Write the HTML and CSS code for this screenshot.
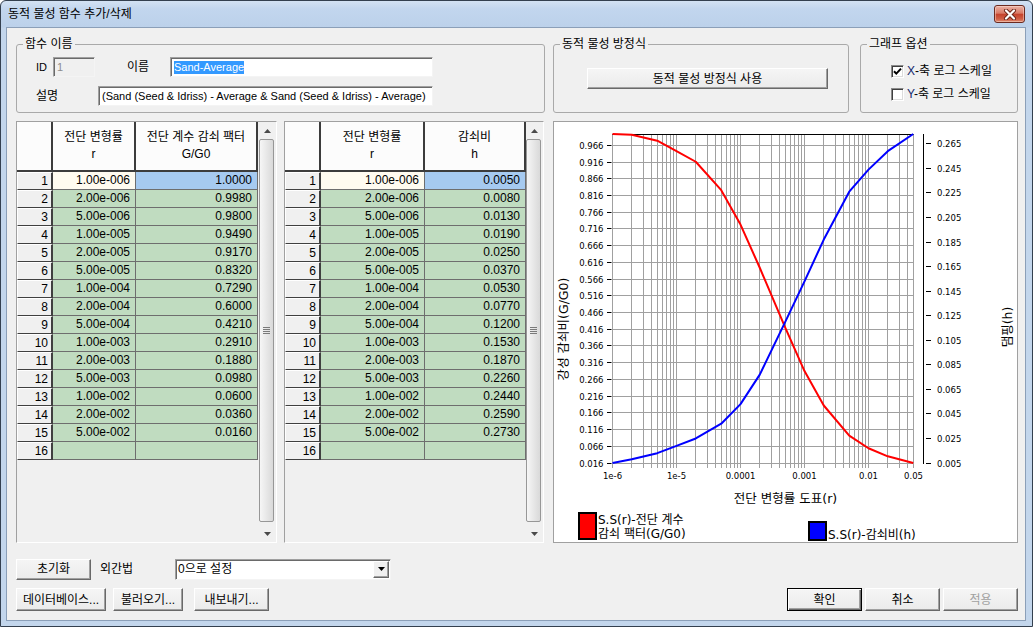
FILE: index.html
```html
<!DOCTYPE html>
<html lang="ko">
<head>
<meta charset="utf-8">
<title>동적 물성 함수 추가/삭제</title>
<link rel="stylesheet" href="styles.css">
</head>
<body>
<div class="window">
  <div class="titlebar">
    <span class="title">동적 물성 함수 추가/삭제</span>
    <span class="close"><svg width="14" height="11" viewBox="0 0 14 11"><path d="M3 1.5L11 9.5M11 1.5L3 9.5" stroke="#6a2418" stroke-width="4" stroke-linecap="round"/><path d="M3 1.5L11 9.5M11 1.5L3 9.5" stroke="#fff" stroke-width="2.2" stroke-linecap="round"/></svg></span>
  </div>
  <div class="client">
    <div class="top">
      <div class="group g-name">
        <div class="gtitle">함수 이름</div>
        <div class="row r1">
          <span class="lbl lbl-id">ID</span>
          <span class="edit edit-id">1</span>
          <span class="lbl lbl-name">이름</span>
          <span class="edit edit-name"><span class="sel">Sand-Average</span></span>
        </div>
        <div class="row r2">
          <span class="lbl lbl-desc">설명</span>
          <span class="edit edit-desc">(Sand (Seed &amp; Idriss) - Average &amp; Sand (Seed &amp; Idriss) - Average)</span>
        </div>
      </div>
      <div class="group g-eq">
        <div class="gtitle">동적 물성 방정식</div>
        <div class="btn btn-eq">동적 물성 방정식 사용</div>
      </div>
      <div class="group g-opt">
        <div class="gtitle">그래프 옵션</div>
        <div class="check c1"><span class="box"><svg width="11" height="11" viewBox="0 0 11 11"><path d="M2 5.2L4.3 7.6L9 2.6" fill="none" stroke="#000" stroke-width="2"/></svg></span><span><span class="xy">X</span>-축 로그 스케일</span></div>
        <div class="check c2"><span class="box"></span><span><span class="xy">Y</span>-축 로그 스케일</span></div>
      </div>
    </div>

    <div class="middle">
      <div class="tpanel tp-left">
        <div class="grid grid-l">
          <div class="hc"></div>
          <div class="hc"><span>전단 변형률</span><span>r</span></div>
          <div class="hc"><span>전단 계수 감쇠 팩터</span><span>G/G0</span></div>
          <div class="rn">1</div><div class="dc iv">1.00e-006</div><div class="dc sc">1.0000</div>
          <div class="rn">2</div><div class="dc">2.00e-006</div><div class="dc">0.9980</div>
          <div class="rn">3</div><div class="dc">5.00e-006</div><div class="dc">0.9800</div>
          <div class="rn">4</div><div class="dc">1.00e-005</div><div class="dc">0.9490</div>
          <div class="rn">5</div><div class="dc">2.00e-005</div><div class="dc">0.9170</div>
          <div class="rn">6</div><div class="dc">5.00e-005</div><div class="dc">0.8320</div>
          <div class="rn">7</div><div class="dc">1.00e-004</div><div class="dc">0.7290</div>
          <div class="rn">8</div><div class="dc">2.00e-004</div><div class="dc">0.6000</div>
          <div class="rn">9</div><div class="dc">5.00e-004</div><div class="dc">0.4210</div>
          <div class="rn">10</div><div class="dc">1.00e-003</div><div class="dc">0.2910</div>
          <div class="rn">11</div><div class="dc">2.00e-003</div><div class="dc">0.1880</div>
          <div class="rn">12</div><div class="dc">5.00e-003</div><div class="dc">0.0980</div>
          <div class="rn">13</div><div class="dc">1.00e-002</div><div class="dc">0.0600</div>
          <div class="rn">14</div><div class="dc">2.00e-002</div><div class="dc">0.0360</div>
          <div class="rn">15</div><div class="dc">5.00e-002</div><div class="dc">0.0160</div>
          <div class="rn">16</div><div class="dc"></div><div class="dc"></div>
        </div>
        <div class="vscroll vs-left">
          <div class="arrow"><svg width="7" height="4" viewBox="0 0 7 4"><path d="M0 4L3.5 0L7 4Z" fill="#4a4a4a"/></svg></div>
          <div class="thumb"><svg width="7" height="7" viewBox="0 0 7 7"><path d="M0 0.5H7M0 2.5H7M0 4.5H7M0 6.5H7" stroke="#7a7a7a"/></svg></div>
          <div class="arrow"><svg width="7" height="4" viewBox="0 0 7 4"><path d="M0 0L7 0L3.5 4Z" fill="#4a4a4a"/></svg></div>
        </div>
      </div>

      <div class="tpanel tp-right">
        <div class="grid grid-r">
          <div class="hc"></div>
          <div class="hc"><span>전단 변형률</span><span>r</span></div>
          <div class="hc"><span>감쇠비</span><span>h</span></div>
          <div class="rn">1</div><div class="dc iv">1.00e-006</div><div class="dc sc">0.0050</div>
          <div class="rn">2</div><div class="dc">2.00e-006</div><div class="dc">0.0080</div>
          <div class="rn">3</div><div class="dc">5.00e-006</div><div class="dc">0.0130</div>
          <div class="rn">4</div><div class="dc">1.00e-005</div><div class="dc">0.0190</div>
          <div class="rn">5</div><div class="dc">2.00e-005</div><div class="dc">0.0250</div>
          <div class="rn">6</div><div class="dc">5.00e-005</div><div class="dc">0.0370</div>
          <div class="rn">7</div><div class="dc">1.00e-004</div><div class="dc">0.0530</div>
          <div class="rn">8</div><div class="dc">2.00e-004</div><div class="dc">0.0770</div>
          <div class="rn">9</div><div class="dc">5.00e-004</div><div class="dc">0.1200</div>
          <div class="rn">10</div><div class="dc">1.00e-003</div><div class="dc">0.1530</div>
          <div class="rn">11</div><div class="dc">2.00e-003</div><div class="dc">0.1870</div>
          <div class="rn">12</div><div class="dc">5.00e-003</div><div class="dc">0.2260</div>
          <div class="rn">13</div><div class="dc">1.00e-002</div><div class="dc">0.2440</div>
          <div class="rn">14</div><div class="dc">2.00e-002</div><div class="dc">0.2590</div>
          <div class="rn">15</div><div class="dc">5.00e-002</div><div class="dc">0.2730</div>
          <div class="rn">16</div><div class="dc"></div><div class="dc"></div>
        </div>
        <div class="vscroll vs-right">
          <div class="arrow"><svg width="7" height="4" viewBox="0 0 7 4"><path d="M0 4L3.5 0L7 4Z" fill="#4a4a4a"/></svg></div>
          <div class="thumb"><svg width="7" height="7" viewBox="0 0 7 7"><path d="M0 0.5H7M0 2.5H7M0 4.5H7M0 6.5H7" stroke="#7a7a7a"/></svg></div>
          <div class="arrow"><svg width="7" height="4" viewBox="0 0 7 4"><path d="M0 0L7 0L3.5 4Z" fill="#4a4a4a"/></svg></div>
        </div>
      </div>

      <div class="chart">
        <svg class="plot" width="463" height="420" viewBox="1 1 463 420">
          <defs>
            <path id="dec" d="M0 13V347M19 13V347M31 13V347M39 13V347M45 13V347M50 13V347M54 13V347M58 13V347M61 13V347" stroke="#a0a0a0" stroke-width="1" fill="none"/>
          </defs>
          <path d="M59.5 342.5H360.5M59.5 325.5H360.5M59.5 308.5H360.5M59.5 291.5H360.5M59.5 275.5H360.5M59.5 258.5H360.5M59.5 241.5H360.5M59.5 224.5H360.5M59.5 208.5H360.5M59.5 191.5H360.5M59.5 174.5H360.5M59.5 158.5H360.5M59.5 141.5H360.5M59.5 124.5H360.5M59.5 107.5H360.5M59.5 91.5H360.5M59.5 74.5H360.5M59.5 57.5H360.5M59.5 41.5H360.5M59.5 24.5H360.5" stroke="#a0a0a0" stroke-width="1" fill="none"/>
          <use href="#dec" x="59.5"/>
          <use href="#dec" x="123.5"/>
          <use href="#dec" x="187.5"/>
          <use href="#dec" x="251.5"/>
          <path d="M315.5 13V347M334.5 13V347M346.5 13V347M354.5 13V347M360.5 13V347" stroke="#a0a0a0" stroke-width="1" fill="none"/>
          <path d="M59.5 13.5H360.5" stroke="#000" stroke-width="1.2"/>
          <path d="M54 342.5h4.5M54 325.5h4.5M54 308.5h4.5M54 291.5h4.5M54 275.5h4.5M54 258.5h4.5M54 241.5h4.5M54 224.5h4.5M54 208.5h4.5M54 191.5h4.5M54 174.5h4.5M54 158.5h4.5M54 141.5h4.5M54 124.5h4.5M54 107.5h4.5M54 91.5h4.5M54 74.5h4.5M54 57.5h4.5M54 41.5h4.5M54 24.5h4.5" stroke="#000" stroke-width="1"/>
          <path d="M370.5 13V343" stroke="#000" stroke-width="1"/>
          <path d="M373 342.5h5M373 317.5h5M373 292.5h5M373 268.5h5M373 243.5h5M373 219.5h5M373 194.5h5M373 170.5h5M373 145.5h5M373 121.5h5M373 96.5h5M373 71.5h5M373 47.5h5M373 22.5h5" stroke="#000" stroke-width="1"/>

          <g class="ax" text-anchor="end">
            <text x="50.5" y="345.6">0.016</text>
            <text x="50.5" y="328.6">0.066</text>
            <text x="50.5" y="311.6">0.116</text>
            <text x="50.5" y="294.6">0.166</text>
            <text x="50.5" y="278.6">0.216</text>
            <text x="50.5" y="261.6">0.266</text>
            <text x="50.5" y="244.6">0.316</text>
            <text x="50.5" y="227.6">0.366</text>
            <text x="50.5" y="211.6">0.416</text>
            <text x="50.5" y="194.6">0.466</text>
            <text x="50.5" y="177.6">0.516</text>
            <text x="50.5" y="161.6">0.566</text>
            <text x="50.5" y="144.6">0.616</text>
            <text x="50.5" y="127.6">0.666</text>
            <text x="50.5" y="110.6">0.716</text>
            <text x="50.5" y="94.6">0.766</text>
            <text x="50.5" y="77.6">0.816</text>
            <text x="50.5" y="60.6">0.866</text>
            <text x="50.5" y="44.6">0.916</text>
            <text x="50.5" y="27.6">0.966</text>
          </g>
          <g class="ax" text-anchor="start">
            <text x="384" y="345.6">0.005</text>
            <text x="384" y="320.6">0.025</text>
            <text x="384" y="295.6">0.045</text>
            <text x="384" y="271.6">0.065</text>
            <text x="384" y="246.6">0.085</text>
            <text x="384" y="222.6">0.105</text>
            <text x="384" y="197.6">0.125</text>
            <text x="384" y="173.6">0.145</text>
            <text x="384" y="148.6">0.165</text>
            <text x="384" y="124.6">0.185</text>
            <text x="384" y="99.6">0.205</text>
            <text x="384" y="74.6">0.225</text>
            <text x="384" y="50.6">0.245</text>
            <text x="384" y="25.6">0.265</text>
          </g>
          <g class="ax" text-anchor="middle">
            <text x="59.5" y="358">1e-6</text>
            <text x="123.5" y="358">1e-5</text>
            <text x="187.5" y="358">0.0001</text>
            <text x="251.5" y="358">0.001</text>
            <text x="315.5" y="358">0.01</text>
            <text x="360.5" y="358">0.05</text>
          </g>

          <polyline points="59.5,13 78.77,13.67 104.24,19.69 123.5,30.05 142.77,40.75 168.24,69.17 187.5,103.61 206.77,146.74 232.24,206.59 251.5,250.05 270.77,284.49 296.24,314.58 315.5,327.29 334.77,335.31 360.24,342" fill="none" stroke="#ff0000" stroke-width="2" stroke-linejoin="round"/>
          <polyline points="59.5,342 78.77,338.32 104.24,332.18 123.5,324.81 142.77,317.45 168.24,302.72 187.5,283.08 206.77,253.61 232.24,200.83 251.5,160.32 270.77,118.58 296.24,70.7 315.5,48.6 334.77,30.19 360.24,13" fill="none" stroke="#0000ff" stroke-width="2" stroke-linejoin="round"/>

          <text class="ttl" text-anchor="middle" transform="translate(15 208) rotate(-90)">강성 감쇠비(G/G0)</text>
          <text class="ttl" text-anchor="middle" transform="translate(459 206) rotate(-90)">댐핑(h)</text>
          <text class="ttl" text-anchor="middle" x="232.5" y="382">전단 변형률 도표(r)</text>

          <rect x="26" y="392" width="17" height="26" fill="#ff0000" stroke="#000" stroke-width="2"/>
          <text class="lg" x="45" y="402.5">S.S(r)-전단 계수</text>
          <text class="lg" x="45" y="416.5">감쇠 팩터(G/G0)</text>
          <rect x="256" y="401" width="17" height="18" fill="#0000ff" stroke="#000" stroke-width="2"/>
          <text class="lg" x="275" y="417.5">S.S(r)-감쇠비(h)</text>
        </svg>
      </div>
    </div>

    <div class="b1">
      <div class="btn btn-init">초기화</div>
      <span class="lbl lbl-ext">외간법</span>
      <div class="combo"><span class="combo-text">0으로 설정</span><span class="drop"><svg width="7" height="4" viewBox="0 0 7 4"><path d="M0 0L7 0L3.5 4Z" fill="#000"/></svg></span></div>
    </div>
    <div class="b2">
      <div class="btn btn-db">데이터베이스...</div>
      <div class="btn btn-load">불러오기...</div>
      <div class="btn btn-export">내보내기...</div>
      <div class="spacer"></div>
      <div class="btn btn-ok">확인</div>
      <div class="btn btn-cancel">취소</div>
      <div class="btn btn-apply">적용</div>
    </div>
  </div>
</div>
</body>
</html>
```

FILE: styles.css
```css
* { box-sizing: border-box; }
html, body { margin: 0; padding: 0; }
body {
  width: 1033px;
  height: 627px;
  overflow: hidden;
  background: #ffffff;
  font-family: "Liberation Sans", "Noto Sans CJK KR", sans-serif;
  font-size: 12px;
  color: #000;
}

.window {
  width: 1033px;
  height: 627px;
  border: 1px solid #34404f;
  border-radius: 6px 6px 0 0;
  background: linear-gradient(#d3e2f3 0px, #c2d6ee 8px, #bcd1ea 26px, #c3d6ec 27px, #c3d6ec 100%);
  padding: 0 6px 5px 5px;
  display: flex;
  flex-direction: column;
}

.titlebar {
  height: 26px;
  flex: none;
  display: flex;
  align-items: center;
  justify-content: space-between;
  padding: 0 1px 0 2px;
}
.title { font-size: 12px; line-height: 16px; color: #000; }
.close {
  width: 31px;
  height: 18px;
  border: 1px solid #6b2a20;
  border-radius: 3px;
  background: linear-gradient(#eab2a5 0%, #d97a66 45%, #c5432d 52%, #cf5d44 80%, #e08a6e 100%);
  box-shadow: inset 0 0 0 1px rgba(255, 230, 220, 0.45);
  display: flex;
  align-items: center;
  justify-content: center;
}
.close svg { display: block; }

.client {
  flex: 1;
  border: 1px solid #8b9fb8;
  background: #f0f0f0;
  padding: 16px 7px 0 9px;
  display: flex;
  flex-direction: column;
}

/* ---------- top groups ---------- */
.top { display: flex; height: 69px; flex: none; }
.group {
  height: 69px;
  border: 1px solid #a9a9a9;
  border-radius: 3px;
}
.g-name { width: 529px; margin-right: 8px; }
.g-eq { width: 296px; margin-right: 11px; }
.g-opt { width: 158px; }
.gtitle {
  width: fit-content;
  height: 16px;
  margin: -9px 0 0 6px;
  padding: 0 2px;
  background: #f0f0f0;
  line-height: 16px;
  font-size: 12px;
}

.row { display: flex; align-items: center; height: 20px; }
.r1 { margin-top: 5px; }
.r2 { margin-top: 9px; }
.lbl { font-size: 12px; line-height: 16px; white-space: nowrap; }
.lbl-id { margin-left: 19px; width: 17px; font-size: 11px; }
.lbl-name { margin-left: 32px; width: 24px; }
.lbl-desc { margin-left: 19px; width: 24px; }

.edit {
  height: 20px;
  background: #fff;
  border-top: 1px solid #a0a0a0;
  border-left: 1px solid #a0a0a0;
  border-right: 1px solid #f4f4f4;
  border-bottom: 1px solid #f4f4f4;
  box-shadow: inset 1px 1px 0 #6a6a6a;
  font-size: 11px;
  line-height: 17px;
  padding: 1px 0 0 3px;
  white-space: nowrap;
  overflow: hidden;
}
.edit-id { width: 42px; background: #f0f0f0; color: #8d8d8d; }
.edit-name { margin-left: 19px; width: 263px; }
.edit-desc { margin-left: 38px; width: 335px; }
.sel { background: #3399ff; color: #fff; display: inline-block; line-height: 13px; }

.btn {
  display: flex;
  align-items: center;
  justify-content: center;
  background: linear-gradient(#f5f5f5, #ebebeb);
  border: 1px solid;
  border-color: #ffffff #696969 #696969 #ffffff;
  box-shadow: inset -1px -1px 0 #a0a0a0;
  font-size: 12px;
  line-height: 14px;
  white-space: nowrap;
  color: #000;
}
.btn-eq { margin: 16px 0 0 33px; width: 241px; height: 21px; }

.check { display: flex; align-items: center; height: 16px; margin-left: 30px; font-size: 12px; line-height: 16px; }
.c1 { margin-top: 11px; }
.c2 { margin-top: 7px; }
.box {
  width: 13px;
  height: 13px;
  margin-right: 3px;
  background: #fff;
  border: 1px solid;
  border-color: #8a8a8a #ffffff #ffffff #8a8a8a;
  box-shadow: inset 1px 1px 0 #3f3f3f, inset -1px -1px 0 #dcdcdc;
  display: flex;
  align-items: center;
  justify-content: center;
}
.box svg { display: block; }
.xy { color: #14286e; }

/* ---------- tables ---------- */
.middle { display: flex; height: 422px; margin-top: 8px; flex: none; }
.tpanel {
  display: flex;
  height: 422px;
  background: #f0f0f0;
  border: 1px solid;
  border-color: #a0a0a0 #ffffff #ffffff #a0a0a0;
}
.tp-left { width: 261px; margin-right: 7px; }
.tp-right { width: 260px; margin-right: 9px; }

.grid {
  display: grid;
  grid-template-rows: 50px repeat(16, 18px);
  align-content: start;
  align-self: flex-start;
}
.grid-l { grid-template-columns: 36px 83px 122px; }
.grid-r { grid-template-columns: 36px 104px 101px; }

.hc {
  background: #fcfcfc;
  border-right: 2px solid #3c3c3c;
  border-bottom: 2px solid #3c3c3c;
  display: flex;
  flex-direction: column;
  align-items: center;
  justify-content: center;
  line-height: 17px;
  font-size: 12px;
  white-space: nowrap;
}
.rn {
  height: 18px;
  background: #f0f0f0;
  border-top: 1px solid #ffffff;
  border-left: 1px solid #ffffff;
  border-right: 2px solid #404040;
  border-bottom: 1px solid #404040;
  text-align: right;
  padding-right: 3px;
  line-height: 16px;
  font-size: 12px;
}
.dc {
  height: 18px;
  background: #c0dcc0;
  border-right: 1px solid #6e6e6e;
  border-bottom: 1px solid #6e6e6e;
  text-align: right;
  padding-right: 5px;
  line-height: 17px;
  font-size: 12px;
  white-space: nowrap;
}
.dc.iv { background: #fffbf0; }
.dc.sc { background: #a6caf0; }

.vscroll { display: flex; flex-direction: column; width: 17px; background: #f0f0f0; }
.vs-left { margin-left: 1px; }
.arrow { height: 17px; flex: none; display: flex; align-items: center; justify-content: center; }
.arrow svg { display: block; }
.thumb {
  flex: 1;
  margin: 0 2px 3px 0;
  border: 1px solid #979797;
  border-radius: 2px;
  background: linear-gradient(to right, #f6f6f6, #e6e6e6 55%, #d9d9d9);
  display: flex;
  align-items: center;
  justify-content: center;
}
.thumb svg { display: block; }

/* ---------- chart ---------- */
.chart {
  width: 465px;
  height: 422px;
  border: 1px solid #a0a0a0;
  background: #fff;
}
.plot { display: block; }
.ax { font-family: "DejaVu Sans", sans-serif; font-size: 8.5px; fill: #000; }
.ttl { font-family: "DejaVu Sans", "Noto Sans CJK KR", sans-serif; font-size: 12.5px; fill: #000; }
.lg { font-family: "DejaVu Sans", "Noto Sans CJK KR", sans-serif; font-size: 12px; fill: #000; }

/* ---------- bottom ---------- */
.b1 { display: flex; align-items: center; height: 22px; margin-top: 15px; flex: none; }
.btn-init { width: 75px; height: 21px; }
.lbl-ext { margin-left: 9px; width: 36px; }
.combo {
  margin-left: 39px;
  width: 216px;
  height: 21px;
  display: flex;
  align-items: center;
  background: #fff;
  border-top: 1px solid #a0a0a0;
  border-left: 1px solid #a0a0a0;
  border-right: 1px solid #f4f4f4;
  border-bottom: 1px solid #f4f4f4;
  box-shadow: inset 1px 1px 0 #6a6a6a;
}
.combo-text { flex: 1; padding-left: 2px; font-size: 12px; line-height: 16px; white-space: nowrap; }
.drop {
  width: 16px;
  height: 17px;
  margin-right: 1px;
  display: flex;
  align-items: center;
  justify-content: center;
  background: #f0f0f0;
  border: 1px solid;
  border-color: #ffffff #696969 #696969 #ffffff;
  box-shadow: inset -1px -1px 0 #a0a0a0;
}
.drop svg { display: block; }

.b2 { display: flex; height: 23px; margin-top: 8px; flex: none; }
.b2 .btn { height: 23px; }
.btn-db { width: 90px; }
.btn-load { width: 70px; margin-left: 7px; }
.btn-export { width: 75px; margin-left: 11px; }
.spacer { flex: 1; }
.btn-ok {
  width: 75px;
  border: 1px solid #000;
  box-shadow: inset 1px 1px 0 #fff, inset -1px -1px 0 #696969, inset -2px -2px 0 #a0a0a0;
}
.btn-cancel { width: 75px; margin-left: 3px; }
.btn-apply { width: 75px; margin-left: 3px; color: #a0a0a0; }
```
